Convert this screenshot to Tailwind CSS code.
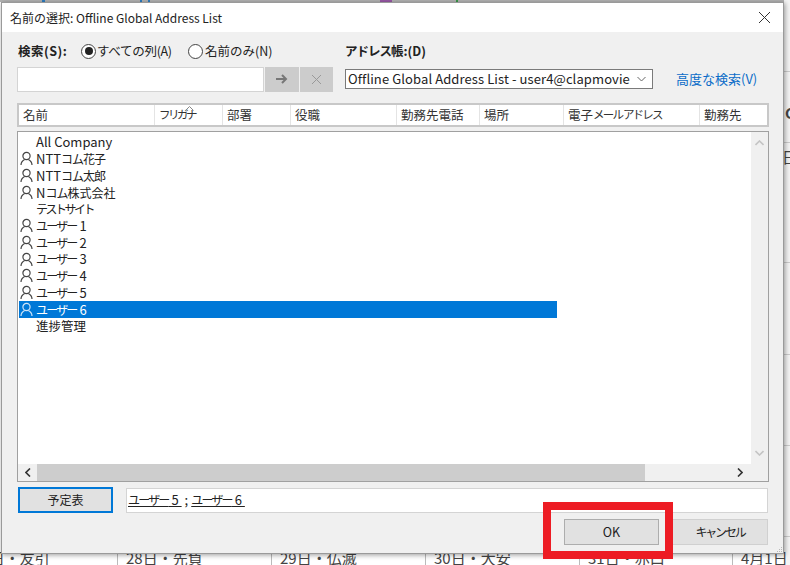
<!DOCTYPE html>
<html lang="ja">
<head>
  <meta charset="UTF-8" />
  <title>名前の選択</title>
  <script src="https://cdn.jsdelivr.net/npm/@tailwindcss/browser@4"></script>
</head>
<body class="bg-white overflow-hidden font-['Noto_Sans_CJK_JP','Noto_Sans',sans-serif]">
  <div class="relative w-[790px] h-[565px] overflow-hidden bg-white text-[#222]">

    <!-- calendar behind the dialog -->
    <div class="absolute left-0 top-0 w-full h-[2px] bg-[#b4b4b4]"></div>
    <div class="absolute left-[42px] top-0 w-[3px] h-[2px] bg-[#2f7fc4]"></div>
    <div class="absolute left-[140px] top-0 w-[2px] h-[2px] bg-[#2f7fc4]"></div>
    <div class="absolute left-[148px] top-0 w-[2px] h-[2px] bg-[#2f7fc4]"></div>
    <div class="absolute left-[380px] top-0 w-[12px] h-[2px] bg-[#9a5aa8]"></div>
    <div class="absolute left-[456px] top-0 w-[2px] h-[2px] bg-[#3a9a4a]"></div>

    <div class="absolute right-0 top-0 w-[6px] h-[565px] bg-[#f4f4f4]">
      <div class="mt-[71px] h-px bg-[#cccccc]"></div>
      <div class="mt-[70px] h-px bg-[#cccccc]"></div>
      <div class="mt-[119px] h-px bg-[#cccccc]"></div>
      <div class="mt-[91px] h-px bg-[#cccccc]"></div>
      <div class="mt-[90px] h-px bg-[#cccccc]"></div>
      <div class="mt-[90px] h-px bg-[#cccccc]"></div>
    </div>
    <span class="absolute left-[785px] top-[103px] text-[15px] leading-[20px] font-bold text-[#444]">C</span>
    <span class="absolute left-[782px] top-[147px] text-[15px] leading-[20px] text-[#444]">日</span>

    <div class="absolute left-[-35px] top-[548px] h-[20px] flex text-[15px] leading-[20px] text-[#444]">
      <div class="w-[153px] pl-[8px] border-r border-[#bbbbbb] whitespace-nowrap">27日・友引</div>
      <div class="w-[154px] pl-[8px] border-r border-[#bbbbbb] whitespace-nowrap">28日・先負</div>
      <div class="w-[154px] pl-[8px] border-r border-[#bbbbbb] whitespace-nowrap">29日・仏滅</div>
      <div class="w-[154px] pl-[8px] border-r border-[#bbbbbb] whitespace-nowrap">30日・大安</div>
      <div class="w-[153px] pl-[8px] border-r border-[#bbbbbb] whitespace-nowrap">31日・赤口</div>
      <div class="w-[100px] pl-[8px] whitespace-nowrap">4月1日</div>
    </div>

    <!-- dialog window -->
    <div class="absolute left-[1px] top-[2px] w-[783px] h-[552px] flex flex-col bg-[#f0f0f0] border border-[#9a9a9a] shadow-[1px_1px_5px_rgba(0,0,0,0.4)]">

      <div class="h-[29px] shrink-0 bg-white flex items-center justify-between pl-[8px] pr-[12px] text-[12px]">
        <span>名前の選択: Offline Global Address List</span>
        <svg width="13" height="13" viewBox="0 0 13 13" fill="none" stroke="#333" stroke-width="1"><path d="M1 1l11 11M12 1L1 12"/></svg>
      </div>

      <div class="relative flex-1 flex flex-col px-[15px] pt-[9px] text-[12.5px]">

        <!-- search row -->
        <div class="h-[20px] flex items-center">
          <span class="w-[64px] pl-[1px] font-bold tracking-[0.5px]">検索(S):</span>
          <span class="flex items-center gap-[1px] w-[107px] tracking-[-0.3px]">
            <span class="w-[15px] h-[15px] rounded-full border border-[#444] bg-white flex items-center justify-center"><span class="w-[8px] h-[8px] rounded-full bg-[#222]"></span></span>
            すべての列(A)
          </span>
          <span class="flex items-center gap-[2px] w-[157px]">
            <span class="w-[15px] h-[15px] rounded-full border border-[#444] bg-white"></span>
            名前のみ(N)
          </span>
          <span class="font-bold"><span class="tracking-[-1px]">アドレス</span>帳:(D)</span>
        </div>

        <div class="mt-[5px] h-[26px] flex items-center">
          <div class="w-[247px] h-[25px] bg-white border border-[#d4d4d4]"></div>
          <div class="ml-[1px] w-[34px] h-[25px] bg-[#cccccc] flex items-center justify-center">
            <svg width="12" height="10" viewBox="0 0 12 10" fill="none" stroke="#777" stroke-width="2"><path d="M0 5h10M6 1l4 4-4 4"/></svg>
          </div>
          <div class="ml-[1px] w-[33px] h-[25px] bg-[#cccccc] flex items-center justify-center">
            <svg width="11" height="11" viewBox="0 0 11 11" fill="none" stroke="#999" stroke-width="1"><path d="M1 1l9 9M10 1l-9 9"/></svg>
          </div>
          <div class="ml-[12px] w-[308px] h-[20px] bg-white border border-[#7a7a7a] flex items-center justify-between pl-[2px] pr-[6px] text-[13px]">
            <span class="whitespace-nowrap tracking-[0.1px]">Offline Global Address List - user4@clapmovie</span>
            <svg width="9" height="6" viewBox="0 0 9 6" fill="none" stroke="#666"><path d="M.5 1l4 4 4-4"/></svg>
          </div>
          <span class="ml-[23px] text-[13px] text-[#0a6cc8] whitespace-nowrap">高度な検索(V)</span>
        </div>

        <!-- column headers -->
        <div class="relative mt-[11px] h-[24px] w-[752px] bg-white border-2 border-[#c8c8c8] flex items-center text-[12.5px] text-[#333]">
          <span class="w-[136px] h-full flex items-center pl-[4px] border-r border-[#e4e4e4]">名前</span>
          <span class="w-[68px] h-full flex items-center pl-[4px] border-r border-[#e4e4e4]"><span class="text-[11.5px] tracking-[-2.5px]">フリガナ</span></span>
          <span class="w-[68px] h-full flex items-center pl-[4px] border-r border-[#e4e4e4]">部署</span>
          <span class="w-[106px] h-full flex items-center pl-[4px] border-r border-[#e4e4e4]">役職</span>
          <span class="w-[83px] h-full flex items-center pl-[4px] border-r border-[#e4e4e4]">勤務先電話</span>
          <span class="w-[84px] h-full flex items-center pl-[4px] border-r border-[#e4e4e4]">場所</span>
          <span class="w-[136px] h-full flex items-center pl-[4px] border-r border-[#e4e4e4] whitespace-pre">電子<span class="text-[11.5px] tracking-[-1.8px]">メール アドレス</span></span>
          <span class="flex-1 h-full flex items-center pl-[4px]">勤務先</span>
          <svg class="absolute left-[166px] top-[1px]" width="9" height="5" viewBox="0 0 9 5" fill="none" stroke="#888"><path d="M.5 4.5l4-4 4 4"/></svg>
        </div>

        <!-- name list -->
        <div class="mt-[4px] h-[351px] w-[752px] bg-white border border-[#a0a0a0] flex flex-col">
          <div class="flex-1 flex min-h-0">
            <div class="flex-1 pt-[1px] pl-[1px] text-[13px]">
              <div class="h-[17px] w-[538px] flex items-center pl-[17px]">All Company</div>
              <div class="h-[17px] w-[538px] flex items-center">
                <svg class="w-[15px] h-[15px] mr-[2px]" viewBox="0 0 15 15" fill="none" stroke="#444" stroke-width="1.2"><circle cx="7.5" cy="5" r="3.6"/><path d="M2 14c0-3 2-4.5 3.6-5.4M13 14c0-3-2-4.5-3.6-5.4"/></svg><span>NTT<span class="text-[12px] tracking-[-1px]">コム花子</span></span>
              </div>
              <div class="h-[17px] w-[538px] flex items-center">
                <svg class="w-[15px] h-[15px] mr-[2px]" viewBox="0 0 15 15" fill="none" stroke="#444" stroke-width="1.2"><circle cx="7.5" cy="5" r="3.6"/><path d="M2 14c0-3 2-4.5 3.6-5.4M13 14c0-3-2-4.5-3.6-5.4"/></svg><span>NTT<span class="text-[12px] tracking-[-1px]">コム太郎</span></span>
              </div>
              <div class="h-[17px] w-[538px] flex items-center">
                <svg class="w-[15px] h-[15px] mr-[2px]" viewBox="0 0 15 15" fill="none" stroke="#444" stroke-width="1.2"><circle cx="7.5" cy="5" r="3.6"/><path d="M2 14c0-3 2-4.5 3.6-5.4M13 14c0-3-2-4.5-3.6-5.4"/></svg><span>N<span class="text-[12px] tracking-[-1px]">コム</span><span class="text-[12px]">株式会社</span></span>
              </div>
              <div class="h-[16px] w-[538px] flex items-center pl-[17px]"><span class="text-[12px] tracking-[-2.5px]">テストサイト</span></div>
              <div class="h-[17px] w-[538px] flex items-center">
                <svg class="w-[15px] h-[15px] mr-[2px]" viewBox="0 0 15 15" fill="none" stroke="#444" stroke-width="1.2"><circle cx="7.5" cy="5" r="3.6"/><path d="M2 14c0-3 2-4.5 3.6-5.4M13 14c0-3-2-4.5-3.6-5.4"/></svg><span class="whitespace-pre"><span class="text-[12px] tracking-[-1.8px]">ユーザー</span> 1</span>
              </div>
              <div class="h-[17px] w-[538px] flex items-center">
                <svg class="w-[15px] h-[15px] mr-[2px]" viewBox="0 0 15 15" fill="none" stroke="#444" stroke-width="1.2"><circle cx="7.5" cy="5" r="3.6"/><path d="M2 14c0-3 2-4.5 3.6-5.4M13 14c0-3-2-4.5-3.6-5.4"/></svg><span class="whitespace-pre"><span class="text-[12px] tracking-[-1.8px]">ユーザー</span> 2</span>
              </div>
              <div class="h-[16px] w-[538px] flex items-center">
                <svg class="w-[15px] h-[15px] mr-[2px]" viewBox="0 0 15 15" fill="none" stroke="#444" stroke-width="1.2"><circle cx="7.5" cy="5" r="3.6"/><path d="M2 14c0-3 2-4.5 3.6-5.4M13 14c0-3-2-4.5-3.6-5.4"/></svg><span class="whitespace-pre"><span class="text-[12px] tracking-[-1.8px]">ユーザー</span> 3</span>
              </div>
              <div class="h-[17px] w-[538px] flex items-center">
                <svg class="w-[15px] h-[15px] mr-[2px]" viewBox="0 0 15 15" fill="none" stroke="#444" stroke-width="1.2"><circle cx="7.5" cy="5" r="3.6"/><path d="M2 14c0-3 2-4.5 3.6-5.4M13 14c0-3-2-4.5-3.6-5.4"/></svg><span class="whitespace-pre"><span class="text-[12px] tracking-[-1.8px]">ユーザー</span> 4</span>
              </div>
              <div class="h-[17px] w-[538px] flex items-center">
                <svg class="w-[15px] h-[15px] mr-[2px]" viewBox="0 0 15 15" fill="none" stroke="#444" stroke-width="1.2"><circle cx="7.5" cy="5" r="3.6"/><path d="M2 14c0-3 2-4.5 3.6-5.4M13 14c0-3-2-4.5-3.6-5.4"/></svg><span class="whitespace-pre"><span class="text-[12px] tracking-[-1.8px]">ユーザー</span> 5</span>
              </div>
              <div class="h-[17px] w-[538px] flex items-center bg-[#0078d7] text-white">
                <svg class="w-[15px] h-[15px] mr-[2px]" viewBox="0 0 15 15" fill="none" stroke="#cfe4f7" stroke-width="1.2"><circle cx="7.5" cy="5" r="3.6"/><path d="M2 14c0-3 2-4.5 3.6-5.4M13 14c0-3-2-4.5-3.6-5.4"/></svg><span class="whitespace-pre"><span class="text-[12px] tracking-[-1.8px]">ユーザー</span> 6</span>
              </div>
              <div class="h-[17px] w-[538px] flex items-center pl-[17px] text-[12.5px]">進捗管理</div>
            </div>
            <!-- vertical scrollbar -->
            <div class="w-[17px] bg-[#f0f0f0] flex flex-col items-center justify-between py-[8px]">
              <svg width="9" height="6" viewBox="0 0 9 6" fill="none" stroke="#c4c4c4" stroke-width="1.6"><path d="M.5 5l4-4 4 4"/></svg>
              <svg width="9" height="6" viewBox="0 0 9 6" fill="none" stroke="#c4c4c4" stroke-width="1.6"><path d="M.5 1l4 4 4-4"/></svg>
            </div>
          </div>
          <!-- horizontal scrollbar -->
          <div class="h-[17px] shrink-0 bg-[#f0f0f0] flex items-center">
            <div class="w-[19px] flex justify-center">
              <svg width="6" height="9" viewBox="0 0 6 9" fill="none" stroke="#333" stroke-width="1.6"><path d="M5 .5l-4 4 4 4"/></svg>
            </div>
            <div class="w-[608px] h-full bg-[#cdcdcd]"></div>
            <div class="flex-1 flex justify-end pr-[25px]">
              <svg width="6" height="9" viewBox="0 0 6 9" fill="none" stroke="#333" stroke-width="1.6"><path d="M1 .5l4 4-4 4"/></svg>
            </div>
          </div>
        </div>

        <!-- selected recipients -->
        <div class="mt-[5px] flex items-center">
          <div class="ml-[1px] w-[95px] h-[26px] bg-[#e1e1e1] border-2 border-[#0078d7] flex items-center justify-center text-[12px]">予定表</div>
          <div class="ml-[13px] w-[642px] h-[25px] bg-white border border-[#d4d4d4] flex items-center pl-[1px] text-[13px]">
            <span class="underline whitespace-pre"><span class="text-[12px] tracking-[-1.8px]">ユーザー</span> 5 </span><span class="mx-[3px]">;</span><span class="underline whitespace-pre"><span class="text-[12px] tracking-[-1.8px]">ユーザー</span> 6 </span>
          </div>
        </div>

        <!-- ok / cancel -->
        <div class="mt-[6px] flex justify-end gap-[13px]">
          <div class="w-[95px] h-[26px] bg-[#e1e1e1] border border-[#adadad] flex items-center justify-center text-[12.5px]">OK</div>
          <div class="w-[96px] h-[26px] bg-[#e1e1e1] border border-[#d0d0d0] flex items-center justify-center text-[12px] tracking-[-2.2px]">キャンセル</div>
        </div>

        <!-- resize grip -->
        <svg class="absolute right-0 bottom-0" width="7" height="7" viewBox="0 0 7 7" fill="#b8b8b8"><rect x="5" y="1" width="1" height="1"/><rect x="3" y="3" width="1" height="1"/><rect x="5" y="3" width="1" height="1"/><rect x="1" y="5" width="1" height="1"/><rect x="3" y="5" width="1" height="1"/><rect x="5" y="5" width="1" height="1"/></svg>
      </div>
    </div>

    <!-- red highlight drawn over the screenshot -->
    <div class="absolute left-[543px] top-[502px] w-[130px] h-[57px] border-[8px] border-[#ed1c24]"></div>
  </div>
</body>
</html>
